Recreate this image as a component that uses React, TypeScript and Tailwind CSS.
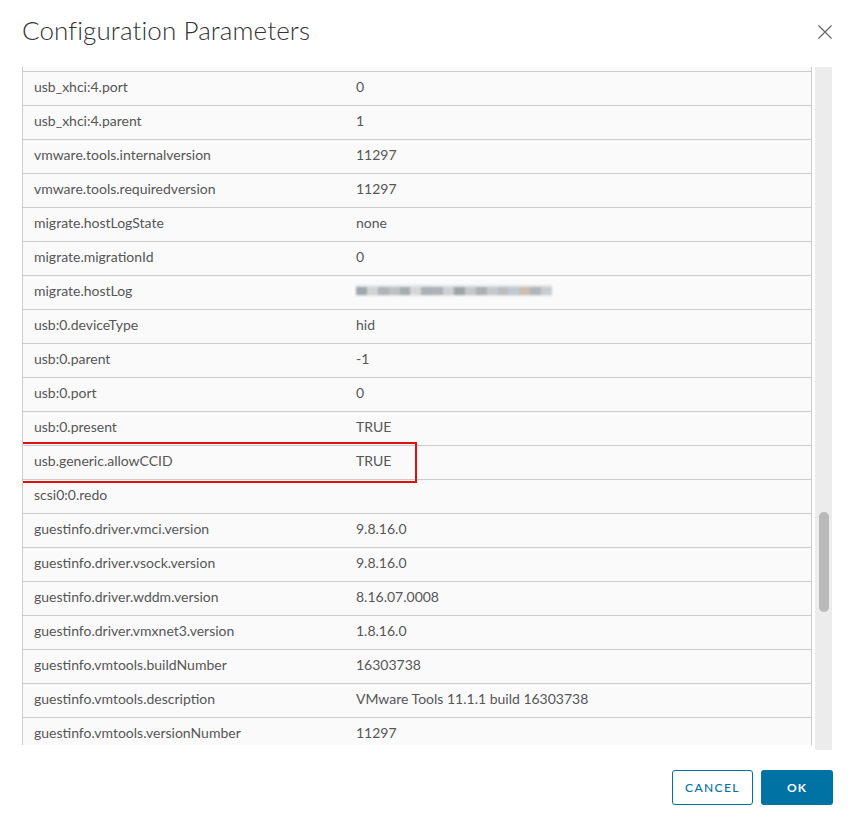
import React from "react";

const rows: [string, string][] = [
  ["", ""],
  ["usb_xhci:4.port", "0"],
  ["usb_xhci:4.parent", "1"],
  ["vmware.tools.internalversion", "11297"],
  ["vmware.tools.requiredversion", "11297"],
  ["migrate.hostLogState", "none"],
  ["migrate.migrationId", "0"],
  ["migrate.hostLog", "__BLUR__"],
  ["usb:0.deviceType", "hid"],
  ["usb:0.parent", "-1"],
  ["usb:0.port", "0"],
  ["usb:0.present", "TRUE"],
  ["usb.generic.allowCCID", "TRUE"],
  ["scsi0:0.redo", ""],
  ["guestinfo.driver.vmci.version", "9.8.16.0"],
  ["guestinfo.driver.vsock.version", "9.8.16.0"],
  ["guestinfo.driver.wddm.version", "8.16.07.0008"],
  ["guestinfo.driver.vmxnet3.version", "1.8.16.0"],
  ["guestinfo.vmtools.buildNumber", "16303738"],
  ["guestinfo.vmtools.description", "VMware Tools 11.1.1 build 16303738"],
  ["guestinfo.vmtools.versionNumber", "11297"],
];

function Blur() {
  const blocks = [
    "#9aa0a6", "#c4c7ca", "#8e9399", "#b9bcc0", "#7f858b", "#c9cccf", "#a3a8ad",
    "#8a9096", "#bfc2c6", "#979ca2", "#b0b4b8", "#868c92", "#c2c5c9", "#9da2a7",
    "#a9b6c4", "#c8b8a8", "#8f959b", "#b7babe",
  ];
  return (
    <div className="flex h-[11px] w-[196px] items-center blur-[1.2px] bg-[#e4e5e6]">
      {blocks.map((c, i) => (
        <div key={i} className="h-[8px] flex-1" style={{ backgroundColor: c, opacity: i % 3 === 0 ? 0.9 : 0.6 }} />
      ))}
    </div>
  );
}

export default function App() {
  return (
    <div className="w-[852px] h-[825px] bg-white flex flex-col text-[#565656]" style={{ fontFamily: "Lato, 'Open Sans', sans-serif" }}>
      <div className="h-[67px] flex items-start justify-between pl-[22px] pr-[19px] pt-[14px]">
        <h1 className="text-[26px] leading-[32px] text-[#333333] font-light tracking-[0.1px]">Configuration Parameters</h1>
        <svg width="16" height="16" viewBox="0 0 16 16" className="mt-[10px]">
          <path d="M1.5 1.5 L14.5 14.5 M14.5 1.5 L1.5 14.5" stroke="#666" strokeWidth="1.3" fill="none" />
        </svg>
      </div>
      <div className="flex h-[683px] pl-[22px] pr-[20px] gap-[3px]">
        <div className="w-[790px] h-[678px] overflow-hidden border-l border-r border-[#cccccc] bg-[#fafafa]">
          <div className="-mt-[29px]">
            {rows.map(([k, v], i) => (
              <div key={i} className="relative h-[34px] flex items-center pb-[4px] border-b border-[#cccccc] text-[14px]">
                <div className="w-[333px] pl-[11px] shrink-0">{k}</div>
                <div>{v === "__BLUR__" ? <Blur /> : v}</div>
                {k === "usb.generic.allowCCID" && (
                  <div className="absolute left-[-6px] top-[-4px] w-[400px] h-[41px] border-2 border-[#e01010]" />
                )}
              </div>
            ))}
          </div>
        </div>
        <div className="w-[17px] h-[683px] bg-[#ececec] pt-[445px] flex justify-center">
          <div className="w-[10px] h-[100px] rounded-full bg-[#b9b9b9]" />
        </div>
      </div>
      <div className="flex justify-end gap-[8px] pr-[19px] pt-[20px]">
        <button className="w-[81px] h-[35px] rounded-[3px] border border-[#0072a3] text-[#0072a3] text-[12px] tracking-[1.4px] font-medium">CANCEL</button>
        <button className="w-[72px] h-[35px] rounded-[3px] bg-[#0072a3] text-white text-[12px] tracking-[1px] font-bold">OK</button>
      </div>
    </div>
  );
}
